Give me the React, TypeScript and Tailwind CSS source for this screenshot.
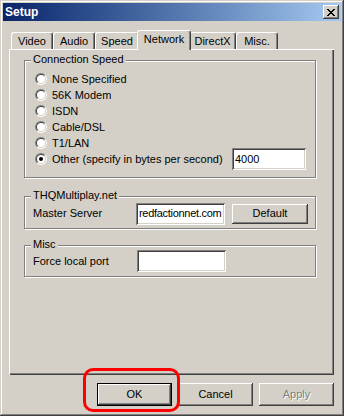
import React from "react";

const raised =
  "shadow-[inset_-1px_-1px_#404040,inset_1px_1px_#fff,inset_-2px_-2px_#808080,inset_2px_2px_#D4D0C8]";
const sunken =
  "shadow-[inset_1px_1px_#808080,inset_-1px_-1px_#fff,inset_2px_2px_#404040,inset_-2px_-2px_#D4D0C8]";

const tabs = [
  { label: "Video", w: "w-[42px]" },
  { label: "Audio", w: "w-[42px]" },
  { label: "Speed", w: "w-[44px]" },
  { label: "Network", w: "w-[54px]", active: true },
  { label: "DirectX", w: "w-[47px]" },
  { label: "Misc.", w: "w-[42px]" },
];

const speeds = ["None Specified", "56K Modem", "ISDN", "Cable/DSL", "T1/LAN"];

function Radio({ checked }: { checked?: boolean }) {
  return (
    <div className="w-[12px] h-[12px] shrink-0 rounded-full border border-t-[#808080] border-l-[#808080] border-r-white border-b-white">
      <div className="w-full h-full rounded-full border border-t-[#404040] border-l-[#404040] border-r-[#D4D0C8] border-b-[#D4D0C8] bg-white flex items-center justify-center">
        {checked && <div className="w-[4px] h-[4px] rounded-full bg-black" />}
      </div>
    </div>
  );
}

function Group({
  title,
  className,
  children,
}: {
  title: string;
  className: string;
  children: React.ReactNode;
}) {
  return (
    <div
      className={`relative w-[292px] border border-[#808080] shadow-[inset_1px_1px_#fff,1px_1px_#fff] ${className}`}
    >
      <span className="absolute left-[6px] top-[-8px] px-[2px] bg-[#D4D0C8] leading-[13px]">
        {title}
      </span>
      {children}
    </div>
  );
}

function Edit({ value, className }: { value?: string; className: string }) {
  return (
    <div
      className={`h-[22px] bg-white ${sunken} flex items-center pl-[3px] overflow-hidden whitespace-nowrap ${className}`}
    >
      {value}
    </div>
  );
}

function Button({
  label,
  isDefault,
  disabled,
  className = "",
}: {
  label: string;
  isDefault?: boolean;
  disabled?: boolean;
  className?: string;
}) {
  return (
    <div className={`${className} ${isDefault ? "border border-black" : ""}`}>
      <div
        className={`w-full h-full flex items-center justify-center ${raised} ${
          disabled ? "text-[#808080] [text-shadow:1px_1px_0_#fff]" : ""
        }`}
      >
        {label}
      </div>
    </div>
  );
}

export default function App() {
  return (
    <div className="relative w-[344px] h-[416px] bg-[#D4D0C8] p-[3px] text-[11px] leading-[13px] text-black font-['Liberation_Sans',Arial,sans-serif] shadow-[inset_-1px_-1px_#404040,inset_1px_1px_#D4D0C8,inset_-2px_-2px_#808080,inset_2px_2px_#fff]">
      {/* title bar */}
      <div className="h-[18px] bg-linear-to-r from-[#0A246A] to-[#A6CAF0] flex items-center justify-between pl-[2px] pr-[2px]">
        <span className="text-white font-bold text-[12px]">Setup</span>
        <div className={`w-[16px] h-[14px] bg-[#D4D0C8] ${raised} flex items-center justify-center`}>
          <svg width="8" height="7" viewBox="0 0 8 7" shapeRendering="crispEdges">
            <path
              d="M0 0h2v1H0zM6 0h2v1H6zM1 1h2v1H1zM5 1h2v1H5zM2 2h4v1H2zM3 3h2v1H3zM2 4h4v1H2zM1 5h2v1H1zM5 5h2v1H5zM0 6h2v1H0zM6 6h2v1H6z"
              fill="#000"
            />
          </svg>
        </div>
      </div>

      {/* tabs */}
      <div className="mt-[9px] ml-[8px] h-[19px] flex items-end">
        {tabs.map((t) =>
          t.active ? (
            <div
              key={t.label}
              className={`${t.w} h-[20px] -mx-[2px] mb-[-1px] relative z-10 bg-[#D4D0C8] rounded-t-[3px] border-t border-l border-white border-r border-r-[#404040] shadow-[inset_-1px_0_#808080] flex items-center justify-center pb-[2px]`}
            >
              {t.label}
            </div>
          ) : (
            <div
              key={t.label}
              className={`${t.w} h-[17px] rounded-t-[3px] border-t border-l border-white border-r border-r-[#404040] shadow-[inset_-1px_0_#808080] flex items-center justify-center`}
            >
              {t.label}
            </div>
          )
        )}
      </div>

      {/* tab panel */}
      <div className="ml-[6px] w-[325px] h-[326px] pt-[11px] pl-[15px] shadow-[inset_1px_1px_#fff,inset_-1px_-1px_#404040,inset_-2px_-2px_#808080]">
        <Group title="Connection Speed" className="pt-[10px] pb-[10px] pl-[10px] pr-[9px]">
          {speeds.map((s) => (
            <div key={s} className="h-[16px] flex items-center">
              <Radio />
              <span className="ml-[5px]">{s}</span>
            </div>
          ))}
          <div className="h-[16px] flex items-center">
            <Radio checked />
            <span className="ml-[5px]">Other (specify in bytes per second)</span>
            <Edit value="4000" className="ml-auto w-[74px] -my-[3px] pl-[2px]" />
          </div>
        </Group>

        <Group title="THQMultiplay.net" className="mt-[18px] h-[33px] flex items-center pl-[8px] pt-[2px]">
          <span className="w-[103px]">Master Server</span>
          <Edit value="redfactionnet.com" className="w-[89px] pl-[2px] tracking-[-0.3px]" />
          <Button label="Default" className="ml-[7px] w-[76px] h-[20px]" />
        </Group>

        <Group title="Misc" className="mt-[16px] h-[32px] flex items-center pl-[8px]">
          <span className="w-[104px]">Force local port</span>
          <Edit className="w-[89px]" />
        </Group>
      </div>

      {/* buttons */}
      <div className="mt-[8px] w-[331px] flex justify-end gap-[6px]">
        <Button label="OK" isDefault className="w-[75px] h-[23px]" />
        <Button label="Cancel" className="w-[75px] h-[23px]" />
        <Button label="Apply" disabled className="w-[75px] h-[23px]" />
      </div>

      {/* red highlight annotation */}
      <div className="absolute left-[83px] top-[368px] w-[97px] h-[44px] border-[3px] border-[#ff0000] rounded-[10px] pointer-events-none" />
    </div>
  );
}
